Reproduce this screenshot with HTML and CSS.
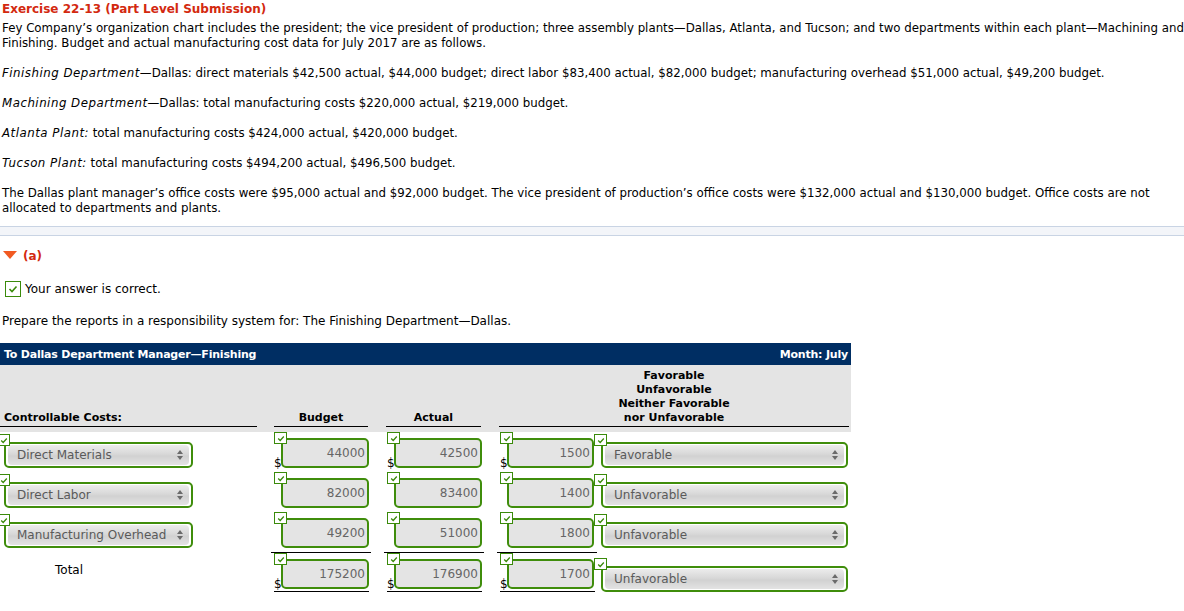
FILE: index.html
```html
<!DOCTYPE html>
<html lang="en">
<head>
    <meta charset="UTF-8">
    <meta name="viewport" content="width=device-width, initial-scale=1.0">
    <title>Exercise 22-13</title>
    <link rel="stylesheet" href="styles.css">
</head>
<body>
    <div class="question">
        <h1 class="exercise-title">Exercise 22-13 (Part Level Submission)</h1>
        <p>Fey Company’s organization chart includes the president; the vice president of production; three assembly plants—Dallas, Atlanta, and Tucson; and two departments within each plant—Machining and Finishing. Budget and actual manufacturing cost data for July 2017 are as follows.</p>
        <p><em>Finishing Department</em>—Dallas: direct materials $42,500 actual, $44,000 budget; direct labor $83,400 actual, $82,000 budget; manufacturing overhead $51,000 actual, $49,200 budget.</p>
        <p><em>Machining Department</em>—Dallas: total manufacturing costs $220,000 actual, $219,000 budget.</p>
        <p><em>Atlanta Plant:</em> total manufacturing costs $424,000 actual, $420,000 budget.</p>
        <p><em>Tucson Plant:</em> total manufacturing costs $494,200 actual, $496,500 budget.</p>
        <p>The Dallas plant manager’s office costs were $95,000 actual and $92,000 budget. The vice president of production’s office costs were $132,000 actual and $130,000 budget. Office costs are not allocated to departments and plants.</p>
    </div>

    <div class="divider"></div>

    <div class="part">
        <div class="part-label">
            <svg class="part-arrow" width="14" height="9" viewBox="0 0 14 9"><polygon points="0,0 14,0 7,8" fill="#f15a22"/></svg>
            <span>(a)</span>
        </div>

        <div class="answer-status">
            <span class="status-box">
                <svg width="10" height="8" viewBox="0 0 10 8"><polyline points="1.5,4 4,6.5 8.5,1.5" fill="none" stroke="#3a8a0a" stroke-width="1.6"/></svg>
            </span>
            Your answer is correct.
        </div>

        <p class="prompt">Prepare the reports in a responsibility system for: The Finishing Department—Dallas.</p>

        <div class="report">
            <div class="report-bar">
                <span>To Dallas Department Manager—Finishing</span>
                <span>Month: July</span>
            </div>
            <div class="report-grid">
                <div class="head head-label"><span class="rule">Controllable Costs:</span></div>
                <div class="head head-budget"><span class="rule">Budget</span></div>
                <div class="head head-actual"><span class="rule">Actual</span></div>
                <div class="head head-result"><span class="rule">Favorable<br>Unfavorable<br>Neither Favorable<br>nor Unfavorable</span></div>

                <!-- row 1 -->
                <div class="cell cell-label">
                    <div class="pick">
                        <span class="tick"><svg viewBox="0 0 10 8"><polyline points="1.5,4 4,6.5 8.5,1.5"/></svg></span>
                        <div class="pick-box"><span>Direct Materials</span><svg class="updown" viewBox="0 0 6 10"><polygon points="3,0 6,4 0,4"/><polygon points="0,6 6,6 3,10"/></svg></div>
                    </div>
                </div>
                <div class="cell cell-num"><div class="num"><span class="tick"><svg viewBox="0 0 10 8"><polyline points="1.5,4 4,6.5 8.5,1.5"/></svg></span><span class="dollar">$</span><input type="text" value="44000" readonly></div></div>
                <div class="cell cell-num"><div class="num"><span class="tick"><svg viewBox="0 0 10 8"><polyline points="1.5,4 4,6.5 8.5,1.5"/></svg></span><span class="dollar">$</span><input type="text" value="42500" readonly></div></div>
                <div class="cell cell-num"><div class="num num-diff"><span class="tick"><svg viewBox="0 0 10 8"><polyline points="1.5,4 4,6.5 8.5,1.5"/></svg></span><span class="dollar">$</span><input type="text" value="1500" readonly></div></div>
                <div class="cell cell-result">
                    <div class="pick pick-wide">
                        <span class="tick"><svg viewBox="0 0 10 8"><polyline points="1.5,4 4,6.5 8.5,1.5"/></svg></span>
                        <div class="pick-box"><span>Favorable</span><svg class="updown" viewBox="0 0 6 10"><polygon points="3,0 6,4 0,4"/><polygon points="0,6 6,6 3,10"/></svg></div>
                    </div>
                </div>

                <!-- row 2 -->
                <div class="cell cell-label">
                    <div class="pick">
                        <span class="tick"><svg viewBox="0 0 10 8"><polyline points="1.5,4 4,6.5 8.5,1.5"/></svg></span>
                        <div class="pick-box"><span>Direct Labor</span><svg class="updown" viewBox="0 0 6 10"><polygon points="3,0 6,4 0,4"/><polygon points="0,6 6,6 3,10"/></svg></div>
                    </div>
                </div>
                <div class="cell cell-num"><div class="num"><span class="tick"><svg viewBox="0 0 10 8"><polyline points="1.5,4 4,6.5 8.5,1.5"/></svg></span><input type="text" value="82000" readonly></div></div>
                <div class="cell cell-num"><div class="num"><span class="tick"><svg viewBox="0 0 10 8"><polyline points="1.5,4 4,6.5 8.5,1.5"/></svg></span><input type="text" value="83400" readonly></div></div>
                <div class="cell cell-num"><div class="num num-diff"><span class="tick"><svg viewBox="0 0 10 8"><polyline points="1.5,4 4,6.5 8.5,1.5"/></svg></span><input type="text" value="1400" readonly></div></div>
                <div class="cell cell-result">
                    <div class="pick pick-wide">
                        <span class="tick"><svg viewBox="0 0 10 8"><polyline points="1.5,4 4,6.5 8.5,1.5"/></svg></span>
                        <div class="pick-box"><span>Unfavorable</span><svg class="updown" viewBox="0 0 6 10"><polygon points="3,0 6,4 0,4"/><polygon points="0,6 6,6 3,10"/></svg></div>
                    </div>
                </div>

                <!-- row 3 -->
                <div class="cell cell-label">
                    <div class="pick">
                        <span class="tick"><svg viewBox="0 0 10 8"><polyline points="1.5,4 4,6.5 8.5,1.5"/></svg></span>
                        <div class="pick-box"><span>Manufacturing Overhead</span><svg class="updown" viewBox="0 0 6 10"><polygon points="3,0 6,4 0,4"/><polygon points="0,6 6,6 3,10"/></svg></div>
                    </div>
                </div>
                <div class="cell cell-num"><div class="num"><span class="tick"><svg viewBox="0 0 10 8"><polyline points="1.5,4 4,6.5 8.5,1.5"/></svg></span><input type="text" value="49200" readonly></div></div>
                <div class="cell cell-num"><div class="num"><span class="tick"><svg viewBox="0 0 10 8"><polyline points="1.5,4 4,6.5 8.5,1.5"/></svg></span><input type="text" value="51000" readonly></div></div>
                <div class="cell cell-num"><div class="num num-diff"><span class="tick"><svg viewBox="0 0 10 8"><polyline points="1.5,4 4,6.5 8.5,1.5"/></svg></span><input type="text" value="1800" readonly></div></div>
                <div class="cell cell-result">
                    <div class="pick pick-wide">
                        <span class="tick"><svg viewBox="0 0 10 8"><polyline points="1.5,4 4,6.5 8.5,1.5"/></svg></span>
                        <div class="pick-box"><span>Unfavorable</span><svg class="updown" viewBox="0 0 6 10"><polygon points="3,0 6,4 0,4"/><polygon points="0,6 6,6 3,10"/></svg></div>
                    </div>
                </div>

                <!-- total -->
                <div class="cell cell-label total-label">Total</div>
                <div class="cell cell-num total"><div class="sum-line"></div><div class="num"><span class="tick"><svg viewBox="0 0 10 8"><polyline points="1.5,4 4,6.5 8.5,1.5"/></svg></span><span class="dollar">$</span><input type="text" value="175200" readonly></div><div class="double-line"></div></div>
                <div class="cell cell-num total"><div class="sum-line"></div><div class="num"><span class="tick"><svg viewBox="0 0 10 8"><polyline points="1.5,4 4,6.5 8.5,1.5"/></svg></span><span class="dollar">$</span><input type="text" value="176900" readonly></div><div class="double-line"></div></div>
                <div class="cell cell-num total"><div class="sum-line"></div><div class="num num-diff"><span class="tick"><svg viewBox="0 0 10 8"><polyline points="1.5,4 4,6.5 8.5,1.5"/></svg></span><span class="dollar">$</span><input type="text" value="1700" readonly></div><div class="double-line"></div></div>
                <div class="cell cell-result total-result">
                    <div class="pick pick-wide">
                        <span class="tick"><svg viewBox="0 0 10 8"><polyline points="1.5,4 4,6.5 8.5,1.5"/></svg></span>
                        <div class="pick-box"><span>Unfavorable</span><svg class="updown" viewBox="0 0 6 10"><polygon points="3,0 6,4 0,4"/><polygon points="0,6 6,6 3,10"/></svg></div>
                    </div>
                </div>
            </div>
        </div>
    </div>
</body>
</html>
```

FILE: styles.css
```css
body {
    font-family: "DejaVu Sans", Verdana, sans-serif;
    font-size: 11.8px;
    color: #000;
    margin: 0;
    background-color: #fff;
}

.question {
    padding-left: 2px;
}

.exercise-title {
    margin: 0 0 2px;
    font-size: 12px;
    line-height: 19px;
    color: #d3290f;
}

.question p {
    margin: 0 0 15px;
    line-height: 15px;
}

.question p:last-child {
    margin-bottom: 10px;
}

.question em {
    letter-spacing: 0.5px;
}

.divider {
    height: 8px;
    background-color: #f3f5f9;
    border-top: 1px solid #c9d4e4;
    border-bottom: 1px solid #c9d4e4;
}

.part {
    padding-top: 12px;
}

.part-label {
    display: flex;
    align-items: center;
    gap: 6px;
    height: 15px;
    padding-left: 3px;
    font-weight: bold;
    font-size: 12px;
    color: #d3290f;
}

.answer-status {
    display: flex;
    align-items: center;
    gap: 4px;
    height: 17px;
    margin-top: 17px;
    padding-left: 5px;
    font-size: 12px;
}

.status-box {
    display: flex;
    align-items: center;
    justify-content: center;
    width: 14px;
    height: 14px;
    border: 1px solid #3a8a0a;
    background-color: #fff;
}

.prompt {
    margin: 17px 0 14px;
    padding-left: 2px;
    font-size: 12px;
    line-height: 15px;
}

/* report table */
.report {
    width: 851px;
}

.report-bar {
    display: flex;
    justify-content: space-between;
    align-items: center;
    height: 22px;
    padding: 0 3px 0 4px;
    background-color: #002e63;
    color: #fff;
    font-weight: bold;
    font-size: 11px;
    letter-spacing: -0.2px;
}

.report-grid {
    display: grid;
    grid-template-columns: 271px 113px 113px 97px 257px;
    grid-template-rows: 67px;
    grid-auto-rows: 40px;
}

.head {
    display: flex;
    align-items: flex-end;
    padding: 3px 0 5px;
    background-color: #e4e4e4;
    font-weight: bold;
    font-size: 11px;
    line-height: 14px;
}

.head .rule {
    flex: 1;
    padding-bottom: 1px;
    border-bottom: 1px solid #000;
    text-align: center;
}

.head-label .rule {
    margin-right: 14px;
    padding-left: 4px;
    text-align: left;
}

.head-budget .rule {
    margin: 0 16px 0 3px;
}

.head-actual .rule {
    margin: 0 16px 0 2px;
}

.head-result {
    grid-column: 4 / 6;
}

.head-result .rule {
    margin: 0 2px;
}

.cell {
    position: relative;
}

.cell-num {
    padding-left: 3px;
}

/* check marks on graded fields */
.tick {
    position: absolute;
    top: 0;
    left: 0;
    z-index: 2;
    display: flex;
    align-items: center;
    justify-content: center;
    width: 11px;
    height: 10px;
    border: 1px solid #3a8a0a;
    background-color: #fff;
}

.tick svg {
    width: 8px;
    height: 7px;
    fill: none;
    stroke: #3a8a0a;
    stroke-width: 1.6;
}

.num {
    position: relative;
    width: 95px;
    padding: 6px 0 0 7px;
    box-sizing: border-box;
}

.num input {
    display: block;
    width: 88px;
    height: 30px;
    box-sizing: border-box;
    border: 2.5px solid #3f8d0b;
    border-radius: 5px;
    background-color: #e4e4e4;
    padding: 0 2px 0 0;
    text-align: right;
    font-family: "DejaVu Sans", Verdana, sans-serif;
    font-size: 12px;
    color: #666;
    outline: none;
}

.num-diff {
    width: 94px;
}

.num-diff input {
    width: 87px;
}

.dollar {
    position: absolute;
    left: 0;
    bottom: -2px;
    font-size: 12px;
    line-height: 14px;
    color: #000;
}

.pick {
    position: relative;
    margin-top: 2px;
    padding: 8px 0 0 7px;
}

.cell-label .pick {
    margin-left: -3px;
}

.pick-box {
    position: relative;
    display: flex;
    width: 189px;
    height: 26px;
    box-sizing: border-box;
    border: 2.5px solid #3f8d0b;
    border-radius: 5px;
    padding: 1px 2px;
    background-color: #fff;
}

.pick-wide .pick-box {
    width: 247px;
}

.pick-box span {
    flex: 1;
    display: flex;
    align-items: center;
    padding-left: 9px;
    border-radius: 4px;
    background: linear-gradient(#ececec, #d8d8d8 45%, #d1d1d1 55%, #e3e3e3);
    color: #5a5a5a;
    font-size: 12px;
}

.updown {
    position: absolute;
    right: 8px;
    top: 50%;
    width: 6px;
    height: 10px;
    margin-top: -5px;
    fill: #6a6a6a;
}

.total-label {
    padding: 11px 0 0 55px;
    font-size: 12px;
}

.sum-line {
    width: 100px;
    margin-left: -3px;
    border-top: 1px solid #000;
}

.double-line {
    width: 95px;
    height: 0;
    margin-top: 2px;
    border-top: 3px double #000;
}

.total-result .pick {
    margin-top: 6px;
}
```
